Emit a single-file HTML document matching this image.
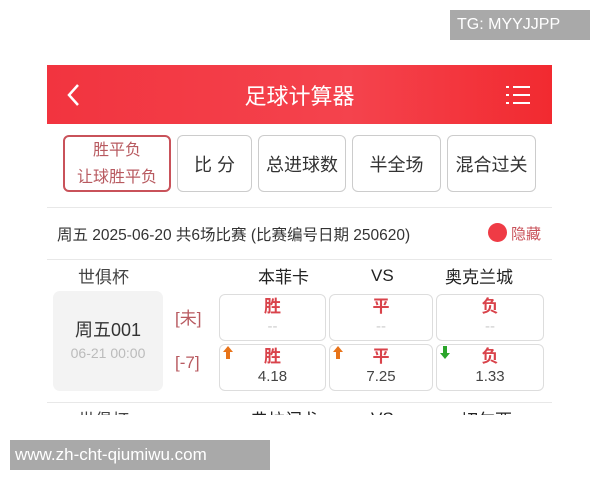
<!DOCTYPE html>
<html><head><meta charset="utf-8"><style>
*{margin:0;padding:0;box-sizing:border-box}
body{width:600px;height:480px;background:#fff;position:relative;overflow:hidden;font-family:"Liberation Sans","Noto Sans CJK SC",sans-serif;color:#333}
.a{position:absolute}
.hdr{left:47px;top:65px;width:505px;height:59px;background:linear-gradient(90deg,#f2343f,#f4434d 60%,#f22a30);color:#fff}
.btn{position:absolute;top:135px;height:57px;border:1px solid #ccc;border-radius:6px;font-size:18px;display:flex;align-items:center;justify-content:center;color:#333}
.cell{position:absolute;border:1px solid #ddd;border-radius:6px;text-align:center;height:47px}
.cell b{display:block;color:#d9434b;font-size:17px;line-height:21px;margin-top:1px}
.cell i{display:block;font-style:normal;font-size:15px;line-height:20px;color:#444}
.arr{position:absolute;left:2px;top:0px}
</style></head><body>
<div class="a" style="left:450px;top:10px;width:140px;height:30px;background:#a9a9a9;color:#fff;font-size:16px;line-height:30px;padding-left:7px">TG: MYYJJPP</div>
<div class="a hdr">
<svg class="a" style="left:18px;top:17px" width="16" height="26"><path d="M13 3 L4 13 L13 23" stroke="#fff" stroke-width="2.5" fill="none"/></svg>
<div class="a" style="left:0;width:505px;top:14px;text-align:center;font-size:22px">足球计算器</div>
<svg class="a" style="left:458px;top:19px" width="26" height="22"><g stroke="#fff" stroke-width="2"><path d="M1 3h3M8 3h17M1 11h3M8 11h17M1 19h3M8 19h17"/></g></svg>
</div>
<div class="btn" style="left:63px;width:108px;border:2px solid #c9525a;color:#b85a60;font-size:16px;flex-direction:column;line-height:27px">胜平负<span>让球胜平负</span></div>
<div class="btn" style="left:177px;width:75px">比 分</div>
<div class="btn" style="left:258px;width:88px">总进球数</div>
<div class="btn" style="left:352px;width:89px">半全场</div>
<div class="btn" style="left:447px;width:89px">混合过关</div>
<div class="a" style="left:47px;top:207px;width:505px;height:1px;background:#e8e8e8"></div>
<div class="a" style="left:57px;top:223px;font-size:15.5px;color:#333">周五 2025-06-20 共6场比赛 (比赛编号日期 250620)</div>
<div class="a" style="left:488px;top:223px;width:19px;height:19px;border-radius:50%;background:#ef3b45"></div>
<div class="a" style="left:511px;top:223px;font-size:15px;color:#c9525a">隐藏</div>
<div class="a" style="left:47px;top:259px;width:505px;height:1px;background:#e8e8e8"></div>
<div class="a" style="left:78px;top:263px;font-size:17px;color:#444">世俱杯</div>
<div class="a" style="left:258px;top:263px;font-size:17px;color:#222">本菲卡</div>
<div class="a" style="left:371px;top:266px;font-size:17px;color:#222">VS</div>
<div class="a" style="left:445px;top:263px;font-size:17px;color:#222">奥克兰城</div>
<div class="a" style="left:53px;top:291px;width:110px;height:100px;background:#f3f3f3;border-radius:7px;text-align:center">
<div style="margin-top:25px;font-size:18px;color:#333">周五001</div>
<div style="margin-top:3px;font-size:14px;color:#bbb">06-21 00:00</div></div>
<div class="a" style="left:175px;top:304px;font-size:17px;color:#b85a60">[未]</div>
<div class="a" style="left:175px;top:353px;font-size:17px;color:#b85a60">[-7]</div>
<div class="cell" style="left:219px;top:294px;width:107px"><b>胜</b><i style="color:#ccc">--</i></div>
<div class="cell" style="left:329px;top:294px;width:104px"><b>平</b><i style="color:#ccc">--</i></div>
<div class="cell" style="left:436px;top:294px;width:108px"><b>负</b><i style="color:#ccc">--</i></div>
<div class="cell" style="left:219px;top:344px;width:107px"><svg class="arr" width="12" height="16"><path d="M6 1L11 7H8V14H4V7H1Z" fill="#e8741a"/></svg><b>胜</b><i>4.18</i></div>
<div class="cell" style="left:329px;top:344px;width:104px"><svg class="arr" width="12" height="16"><path d="M6 1L11 7H8V14H4V7H1Z" fill="#e8741a"/></svg><b>平</b><i>7.25</i></div>
<div class="cell" style="left:436px;top:344px;width:108px"><svg class="arr" width="12" height="16"><path d="M6 14L11 8H8V1H4V8H1Z" fill="#2aa52a"/></svg><b>负</b><i>1.33</i></div>
<div class="a" style="left:47px;top:402px;width:505px;height:1px;background:#e8e8e8"></div>
<div class="a" style="left:47px;top:403px;width:505px;height:12px;overflow:hidden">
<div class="a" style="left:31px;top:3px;font-size:17px;color:#444">世俱杯</div>
<div class="a" style="left:204px;top:3px;font-size:17px;color:#222">弗拉门戈</div>
<div class="a" style="left:324px;top:6px;font-size:17px;color:#222">VS</div>
<div class="a" style="left:414px;top:3px;font-size:17px;color:#222">切尔西</div></div>
<div class="a" style="left:10px;top:440px;width:260px;height:30px;background:#a9a9a9;color:#fff;font-size:17px;line-height:30px;padding-left:5px">www.zh-cht-qiumiwu.com</div>
</body></html>
